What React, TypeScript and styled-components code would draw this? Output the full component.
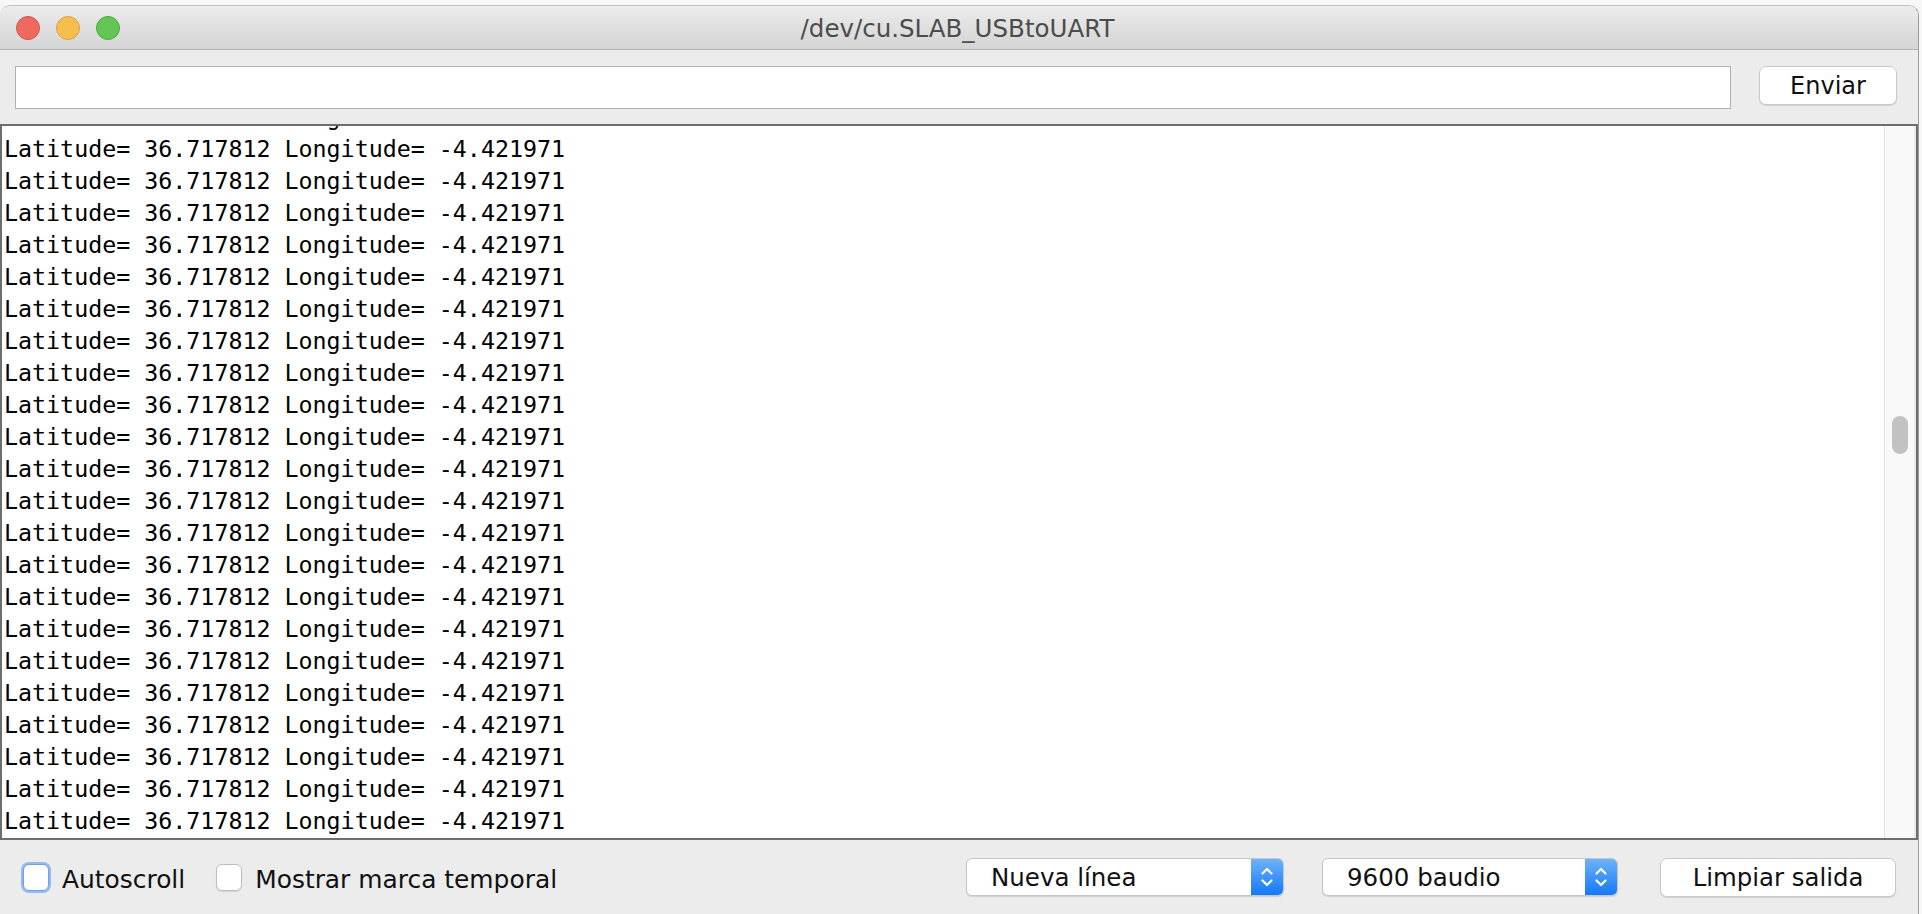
import React from "react";
import styled, { createGlobalStyle } from "styled-components";

const GlobalStyle = createGlobalStyle`
  html, body {
    margin: 0;
    height: 100%;
    overflow: hidden;
    background: #f7f7f7;
  }
  body {
    font-family: "DejaVu Sans", "Liberation Sans", sans-serif;
    color: #111;
  }
`;

const LINE = "Latitude= 36.717812 Longitude= -4.421971";
const lines = Array.from({ length: 23 }, () => LINE);

const Window = styled.div`
  margin-top: 5px;
  width: 1918px;
  height: 908px;
  display: flex;
  flex-direction: column;
  background: #ececec;
  border-top: 1px solid #c2c2c2;
  border-right: 1px solid #9a9a9a;
  border-radius: 10px 10px 0 0;
  overflow: hidden;
`;

const TitleBar = styled.div`
  flex: none;
  height: 43px;
  display: grid;
  grid-template-columns: 1fr auto 1fr;
  align-items: center;
  background: linear-gradient(#ececec, #d4d4d4);
  border-bottom: 1px solid #b4b4b4;
`;

const Lights = styled.div`
  display: flex;
  gap: 16px;
  padding-left: 16px;
`;

const Light = styled.span<{ fill: string; edge: string }>`
  width: 24px;
  height: 24px;
  box-sizing: border-box;
  border-radius: 50%;
  background: ${(p) => p.fill};
  border: 1px solid ${(p) => p.edge};
`;

const Title = styled.div`
  font-size: 24.5px;
  color: #4c4c4c;
  margin-top: 2px;
  margin-left: -3px;
`;

const InputRow = styled.div`
  flex: none;
  height: 74px;
  box-sizing: border-box;
  display: flex;
  align-items: flex-start;
  gap: 28px;
  padding: 16px 21px 0 15px;
`;

const SendField = styled.div`
  flex: 1;
  height: 43px;
  box-sizing: border-box;
  background: #fff;
  border: 1px solid #b2b2b2;
`;

const PushButton = styled.div<{ w: number; size?: number }>`
  width: ${(p) => p.w}px;
  height: 39px;
  box-sizing: border-box;
  display: flex;
  align-items: center;
  justify-content: center;
  background: #fff;
  border: 1px solid #c9c9c9;
  border-radius: 7px;
  box-shadow: 0 1px 1px rgba(0, 0, 0, 0.12);
  font-size: ${(p) => p.size ?? 24}px;
  color: #111;
`;

const Output = styled.div`
  flex: 1;
  min-height: 0;
  display: flex;
  background: #fff;
  border: 2px solid #6e6e6e;
`;

const Log = styled.div`
  flex: 1;
  overflow: hidden;
  padding-left: 2px;
`;

const LogLines = styled.div`
  margin-top: -25px;
`;

const LogLine = styled.div`
  height: 32px;
  line-height: 32px;
  font-family: "DejaVu Sans Mono", "Liberation Mono", monospace;
  font-size: 23.3px;
  color: #000;
  white-space: pre;
`;

const Track = styled.div`
  flex: none;
  width: 32px;
  box-sizing: border-box;
  background: #f9f9f9;
  border-left: 1px solid #e3e3e3;
  border-right: 2px solid #e8e8e8;
  padding: 290px 0 0 7px;
`;

const Thumb = styled.div`
  width: 16px;
  height: 38px;
  border-radius: 8px;
  background: #c2c2c2;
`;

const BottomBar = styled.div`
  flex: none;
  height: 74px;
  display: flex;
  align-items: center;
  padding: 0 22px 0 23px;
`;

const Option = styled.label`
  display: flex;
  align-items: center;
  gap: 13px;
  margin-right: 31px;
  font-size: 24.9px;
  color: #111;
`;

const OptionText = styled.span`
  padding-top: 4px;
`;

const Check = styled.span<{ focused?: boolean }>`
  width: 26px;
  height: 27px;
  box-sizing: border-box;
  background: #fff;
  border-radius: 6px;
  border: 1px solid ${(p) => (p.focused ? "#6d9ee6" : "#bdbdbd")};
  box-shadow: ${(p) =>
    p.focused
      ? "0 0 0 2px rgba(120, 170, 240, 0.75)"
      : "0 1px 1px rgba(0, 0, 0, 0.1)"};
`;

const Controls = styled.div`
  margin-left: auto;
  display: flex;
  align-items: center;
`;

const Select = styled.div<{ w: number; gap: number }>`
  width: ${(p) => p.w}px;
  height: 38px;
  box-sizing: border-box;
  margin-right: ${(p) => p.gap}px;
  display: flex;
  background: #fff;
  border: 1px solid #c6c6c6;
  border-radius: 6px;
  box-shadow: 0 1px 1px rgba(0, 0, 0, 0.12);
  overflow: hidden;
`;

const SelectLabel = styled.div`
  flex: 1;
  display: flex;
  align-items: center;
  padding-left: 24px;
  font-size: 24.5px;
  color: #111;
`;

const Stepper = styled.div`
  width: 32px;
  display: flex;
  align-items: center;
  justify-content: center;
  background: linear-gradient(#6db2fb, #1479fa);
`;

const Chevrons = () => (
  <svg width="12" height="22" viewBox="0 0 12 22" fill="none">
    <path
      d="M1.5 7.5 L6 3 L10.5 7.5"
      stroke="#fff"
      strokeWidth="2.2"
      strokeLinecap="round"
      strokeLinejoin="round"
    />
    <path
      d="M1.5 14.5 L6 19 L10.5 14.5"
      stroke="#fff"
      strokeWidth="2.2"
      strokeLinecap="round"
      strokeLinejoin="round"
    />
  </svg>
);

export default function App() {
  return (
    <>
      <GlobalStyle />
      <Window>
        <TitleBar>
          <Lights>
            <Light fill="#ee6a5f" edge="#d5544a" />
            <Light fill="#f6be4f" edge="#dca23c" />
            <Light fill="#62c554" edge="#4fa740" />
          </Lights>
          <Title>/dev/cu.SLAB_USBtoUART</Title>
          <span />
        </TitleBar>

        <InputRow>
          <SendField />
          <PushButton w={138}>Enviar</PushButton>
        </InputRow>

        <Output>
          <Log>
            <LogLines>
              {lines.map((l, i) => (
                <LogLine key={i}>{l}</LogLine>
              ))}
            </LogLines>
          </Log>
          <Track>
            <Thumb />
          </Track>
        </Output>

        <BottomBar>
          <Option>
            <Check focused />
            <OptionText>Autoscroll</OptionText>
          </Option>
          <Option>
            <Check />
            <OptionText>Mostrar marca temporal</OptionText>
          </Option>
          <Controls>
            <Select w={318} gap={38}>
              <SelectLabel>Nueva línea</SelectLabel>
              <Stepper>
                <Chevrons />
              </Stepper>
            </Select>
            <Select w={296} gap={42}>
              <SelectLabel>9600 baudio</SelectLabel>
              <Stepper>
                <Chevrons />
              </Stepper>
            </Select>
            <PushButton w={236} size={24.4}>
              Limpiar salida
            </PushButton>
          </Controls>
        </BottomBar>
      </Window>
    </>
  );
}
